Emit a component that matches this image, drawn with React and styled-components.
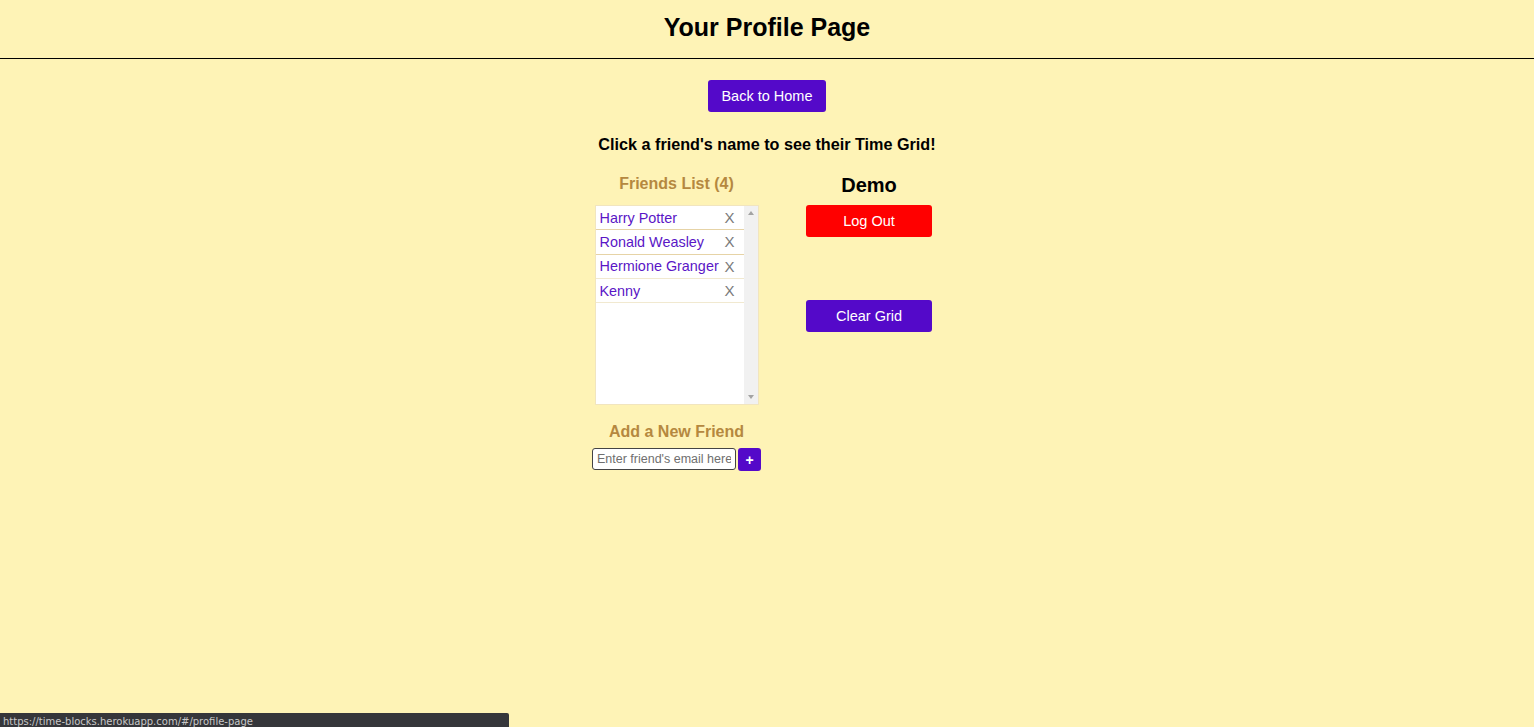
import React from "react";
import styled, { createGlobalStyle } from "styled-components";

const Global = createGlobalStyle`
  html, body { margin: 0; padding: 0; background: #fef3b6; }
  body { font-family: "Liberation Sans", Arial, sans-serif; color: #000; min-height: 727px; }
  * { box-sizing: border-box; }
`;

const Page = styled.div`
  min-height: 727px;
  background: #fef3b6;
`;

const Header = styled.header`
  height: 59px;
  border-bottom: 1px solid #000;
  display: flex;
  justify-content: center;
  align-items: center;
`;

const Title = styled.h1`
  margin: 0 0 4px 0;
  font-size: 25px;
  font-weight: bold;
`;

const Main = styled.main`
  display: flex;
  flex-direction: column;
  align-items: center;
  padding-top: 21px;
`;

const Button = styled.button`
  border: none;
  border-radius: 3px;
  background: ${p => p.$color || "#5409c9"};
  color: #fff;
  font-family: "Liberation Sans", Arial, sans-serif;
  font-size: 14.5px;
  height: 32px;
  width: ${p => p.$width || "auto"};
  padding: 0 13px;
  cursor: pointer;
`;

const Instruction = styled.h3`
  margin: 22px 0 0 0;
  font-size: 16.2px;
  font-weight: bold;
  line-height: 20px;
`;

const Columns = styled.div`
  display: flex;
  gap: 45px;
  margin-top: 20px;
  margin-left: -10px;
  align-items: flex-start;
`;

const Column = styled.div`
  display: flex;
  flex-direction: column;
  align-items: center;
`;

const SectionTitle = styled.h4`
  margin: 0;
  font-size: 16px;
  font-weight: bold;
  color: #b5883f;
  line-height: 20px;
`;

const ListBox = styled.div`
  margin-top: 11px;
  width: 164px;
  height: 200px;
  background: #fff;
  border: 1px solid #f1e5bf;
  display: flex;
`;

const ListItems = styled.div`
  flex: 1;
  display: flex;
  flex-direction: column;
`;

const Row = styled.div`
  height: 24.3px;
  flex: none;
  display: flex;
  align-items: center;
  justify-content: space-between;
  padding: 0 9px 0 4px;
  border-bottom: 1px solid ${p => (p.$strong ? "#e6d3a6" : "#f1e9d0")};
  font-size: 14.4px;
`;

const FriendName = styled.span`
  color: #5a16c6;
  white-space: nowrap;
`;

const Remove = styled.span`
  color: #7a7a7a;
  font-size: 15px;
`;

const Scrollbar = styled.div`
  width: 14px;
  background: #f1f1f1;
  display: flex;
  flex-direction: column;
  justify-content: space-between;
  align-items: center;
  padding: 5px 0;
`;

const Arrow = styled.div`
  width: 0;
  height: 0;
  border-left: 3.5px solid transparent;
  border-right: 3.5px solid transparent;
  ${p =>
    p.$down
      ? "border-top: 4px solid #a3a3a3;"
      : "border-bottom: 4px solid #a3a3a3;"}
`;

const AddTitle = styled(SectionTitle)`
  margin-top: 17px;
`;

const AddRow = styled.div`
  display: flex;
  gap: 2px;
  margin-top: 6px;
`;

const Input = styled.input`
  width: 144px;
  height: 22px;
  border: 1px solid #444;
  border-radius: 3px;
  padding: 0 4px;
  font-family: "Liberation Sans", Arial, sans-serif;
  font-size: 12.5px;
  background: #fff;
  &::placeholder { color: #6f6f6f; }
`;

const PlusButton = styled.button`
  width: 23px;
  height: 23px;
  border: none;
  border-radius: 3px;
  background: #5409c9;
  color: #fff;
  font-size: 14px;
  font-weight: bold;
  padding: 0;
  font-family: "Liberation Sans", Arial, sans-serif;
`;

const UserName = styled.h3`
  margin: 0;
  font-size: 20px;
  font-weight: bold;
  line-height: 22px;
`;

const Stack = styled.div`
  display: flex;
  flex-direction: column;
  gap: 63px;
  margin-top: 9px;
`;

const StatusBar = styled.div`
  position: fixed;
  left: 0;
  bottom: 0;
  width: 509px;
  height: 14px;
  background: #35363a;
  border-top-right-radius: 2px;
  color: #c8c8c8;
  font-family: "DejaVu Sans", "Liberation Sans", sans-serif;
  font-size: 10px;
  line-height: 18px;
  padding-left: 3px;
  overflow: hidden;
`;

const friends = ["Harry Potter", "Ronald Weasley", "Hermione Granger", "Kenny"];

export default function App() {
  return (
    <Page>
      <Global />
      <Header>
        <Title>Your Profile Page</Title>
      </Header>
      <Main>
        <Button>Back to Home</Button>
        <Instruction>Click a friend's name to see their Time Grid!</Instruction>
        <Columns>
          <Column>
            <SectionTitle>Friends List (4)</SectionTitle>
            <ListBox>
              <ListItems>
                {friends.map((f, i) => (
                  <Row key={f} $strong={i < 2}>
                    <FriendName>{f}</FriendName>
                    <Remove>X</Remove>
                  </Row>
                ))}
              </ListItems>
              <Scrollbar>
                <Arrow />
                <Arrow $down />
              </Scrollbar>
            </ListBox>
            <AddTitle>Add a New Friend</AddTitle>
            <AddRow>
              <Input placeholder="Enter friend's email here" />
              <PlusButton>+</PlusButton>
            </AddRow>
          </Column>
          <Column>
            <UserName>Demo</UserName>
            <Stack>
              <Button $color="#ff0000" $width="126px">Log Out</Button>
              <Button $width="126px">Clear Grid</Button>
            </Stack>
          </Column>
        </Columns>
      </Main>
      <StatusBar>https://time-blocks.herokuapp.com/#/profile-page</StatusBar>
    </Page>
  );
}
